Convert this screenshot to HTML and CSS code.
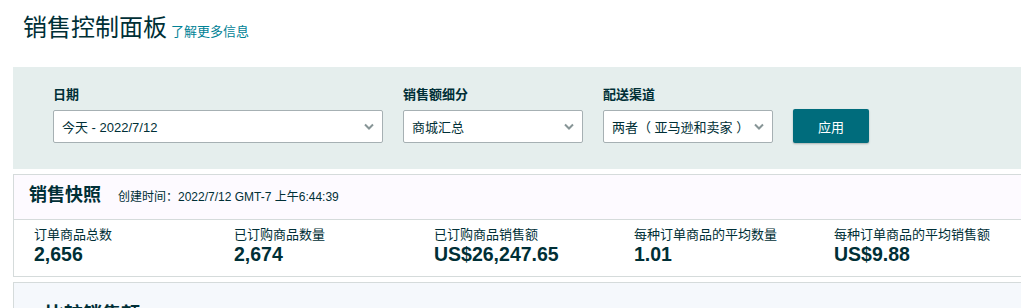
FILE: index.html
```html
<!DOCTYPE html>
<html lang="zh-CN">
<head>
  <meta charset="UTF-8">
  <title>销售控制面板</title>
  <link rel="stylesheet" href="styles.css">
</head>
<body>

  <div class="page">
    <div class="page-head">
      <h1>销售控制面板</h1>
      <a href="#" class="learn-more">了解更多信息</a>
    </div>

    <form class="filters">
      <div class="field">
        <label>日期</label>
        <div class="select select-date">
          <span>今天 - 2022/7/12</span>
          <svg class="chevron" width="10" height="7" viewBox="0 0 10 7"><path d="M1 1.5 L5 5.5 L9 1.5" fill="none" stroke="#879596" stroke-width="2"/></svg>
        </div>
      </div>
      <div class="field">
        <label>销售额细分</label>
        <div class="select select-breakdown">
          <span>商城汇总</span>
          <svg class="chevron" width="10" height="7" viewBox="0 0 10 7"><path d="M1 1.5 L5 5.5 L9 1.5" fill="none" stroke="#879596" stroke-width="2"/></svg>
        </div>
      </div>
      <div class="field">
        <label>配送渠道</label>
        <div class="select select-channel">
          <span>两者（ 亚马逊和卖家 ）</span>
          <svg class="chevron" width="10" height="7" viewBox="0 0 10 7"><path d="M1 1.5 L5 5.5 L9 1.5" fill="none" stroke="#879596" stroke-width="2"/></svg>
        </div>
      </div>
      <button type="button">应用</button>
    </form>

    <section class="card snapshot">
      <div class="card-head">
        <h2>销售快照</h2>
        <span class="created">创建时间：2022/7/12 GMT-7 上午6:44:39</span>
      </div>
      <div class="metrics">
        <div class="metric">
          <div class="metric-label">订单商品总数</div>
          <div class="metric-value">2,656</div>
        </div>
        <div class="metric">
          <div class="metric-label">已订购商品数量</div>
          <div class="metric-value">2,674</div>
        </div>
        <div class="metric">
          <div class="metric-label">已订购商品销售额</div>
          <div class="metric-value">US$26,247.65</div>
        </div>
        <div class="metric">
          <div class="metric-label">每种订单商品的平均数量</div>
          <div class="metric-value">1.01</div>
        </div>
        <div class="metric">
          <div class="metric-label">每种订单商品的平均销售额</div>
          <div class="metric-value">US$9.88</div>
        </div>
      </div>
    </section>

    <section class="card compare">
      <h2>比较销售额</h2>
    </section>
  </div>

</body>
</html>
```

FILE: styles.css
```css
body {
  font-family: "Liberation Sans", "Noto Sans CJK SC", sans-serif;
  color: #002f36;
  background-color: #ffffff;
  margin: 0;
  overflow: hidden;
}

.page {
  width: 1100px;
  padding: 0 0 0 13px;
}

.page-head {
  display: flex;
  align-items: baseline;
  padding: 11px 0 0 10px;
  height: 56px;
}

.page-head h1 {
  margin: 0;
  font-size: 24px;
  font-weight: normal;
  line-height: 34px;
}

.learn-more {
  margin-left: 4px;
  font-size: 13px;
  color: #008296;
  text-decoration: none;
}

.filters {
  display: flex;
  align-items: flex-end;
  gap: 20px;
  background-color: #e5eeed;
  padding: 19px 0 26px 40px;
}

.field label {
  display: block;
  font-size: 13px;
  font-weight: bold;
  line-height: 18px;
  margin-bottom: 6px;
}

.select {
  display: flex;
  align-items: center;
  justify-content: space-between;
  box-sizing: border-box;
  height: 33px;
  padding: 0 8px 0 8px;
  background-color: #ffffff;
  border: 1px solid #a6b0b3;
  border-radius: 2px;
  font-size: 13px;
}

.select-date {
  width: 330px;
}

.select-breakdown {
  width: 180px;
}

.select-channel {
  width: 170px;
}

.chevron {
  flex-shrink: 0;
}

button {
  width: 76px;
  height: 34px;
  background-color: #006c7c;
  color: white;
  border: none;
  border-radius: 2px;
  font-family: inherit;
  font-size: 13px;
  box-shadow: 0 1px 2px rgba(0,0,0,0.25);
  cursor: pointer;
}

.card {
  border: 1px solid #d5dbdb;
  margin-top: 5px;
}

.card-head {
  display: flex;
  align-items: baseline;
  background-color: #fdfaff;
  border-bottom: 1px solid #d5dbdb;
  height: 44px;
  padding-left: 15px;
}

.card-head h2 {
  margin: 0;
  font-size: 18px;
  line-height: 40px;
}

.created {
  margin-left: 17px;
  font-size: 12px;
}

.metrics {
  display: grid;
  grid-template-columns: repeat(5, 200px);
  height: 56px;
  padding-left: 20px;
}

.metric-label {
  font-size: 13px;
  line-height: 16px;
  margin-top: 7px;
}

.metric-value {
  font-size: 19.5px;
  font-weight: bold;
  line-height: 22px;
}

.compare {
  background-color: #f5f8fc;
  height: 60px;
  padding-left: 31px;
}

.compare h2 {
  margin: 16px 0 0;
  font-size: 19px;
}
```
